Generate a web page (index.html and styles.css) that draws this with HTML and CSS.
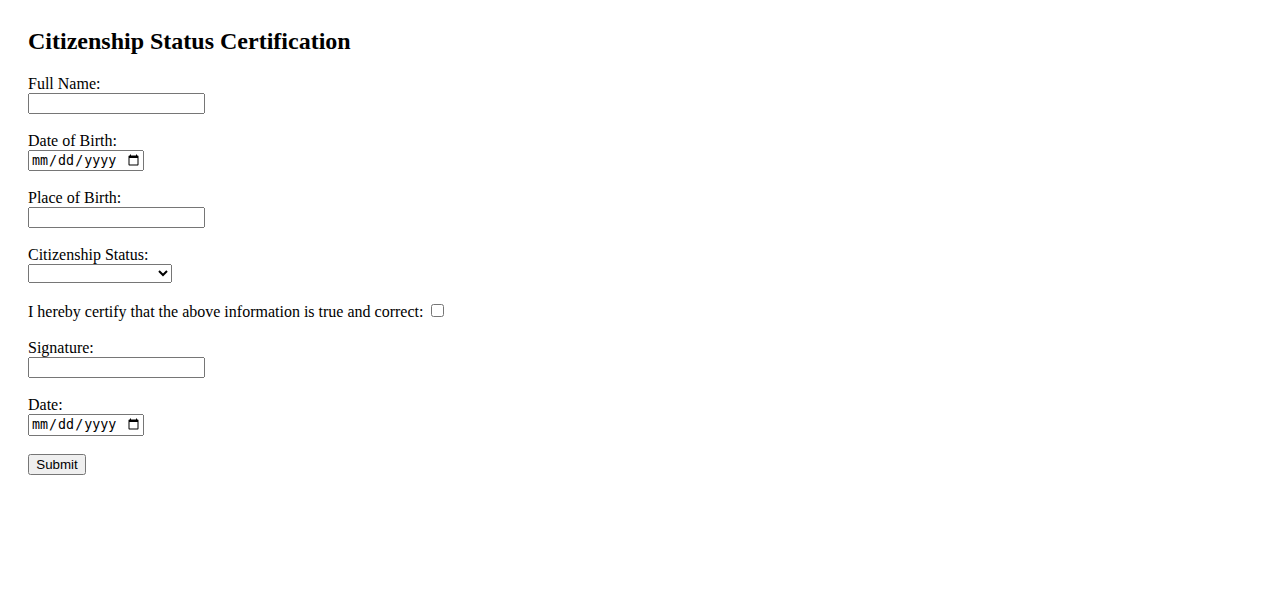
FILE: index.html
```html
<!DOCTYPE html>
<html lang="en">
<head>
<meta charset="utf-8">
<title>Citizenship Status Certification</title>
<link rel="stylesheet" href="styles.css">
</head>
<body class="page">
<h2 class="title">Citizenship Status Certification</h2>
<form class="form">
<label for="fullName">Full Name:</label><br>
<input class="text-field" type="text" id="fullName" name="fullName"><br><br>
<label for="dob">Date of Birth:</label><br>
<input class="date-field" type="date" id="dob" name="dob"><br><br>
<label for="pob">Place of Birth:</label><br>
<input class="text-field" type="text" id="pob" name="pob"><br><br>
<label for="status">Citizenship Status:</label><br>
<select class="select-field" id="status" name="status">
<option value=""></option>
<option value="citizen">Citizen by birth</option>
<option value="naturalized">Naturalized citizen</option>
<option value="resident">Permanent resident</option>
</select><br><br>
<label for="certify">I hereby certify that the above information is true and correct:</label>
<input class="check" type="checkbox" id="certify" name="certify"><br><br>
<label for="signature">Signature:</label><br>
<input class="text-field" type="text" id="signature" name="signature"><br><br>
<label for="date">Date:</label><br>
<input class="date-field" type="date" id="date" name="date"><br><br>
<input class="submit" type="submit" value="Submit">
</form>
</body>
</html>
```
FILE: styles.css
```css
.page {
  margin: 8px;
  padding: 20px;
  font-family: "Liberation Serif", "Times New Roman", serif;
  font-size: 16px;
  color: #000;
  background: #fff;
}
.title {
  margin: 0 0 19.92px;
  font-size: 24px;
  font-weight: bold;
}
.form {
  margin: 0;
}
.text-field {
  box-sizing: border-box;
  width: 177px;
}
.date-field {
  box-sizing: border-box;
  width: 116px;
}
.select-field {
  box-sizing: border-box;
  width: 144px;
}
.submit {
  box-sizing: border-box;
  width: 58px;
}
```
